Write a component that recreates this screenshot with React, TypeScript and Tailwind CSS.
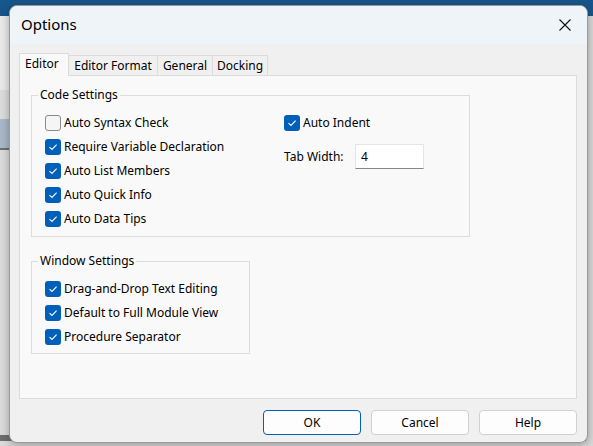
import React from "react";

const font = { fontFamily: '"Noto Sans", "Segoe UI", sans-serif' };

function Box({ checked }: { checked: boolean }) {
  if (!checked)
    return <span className="w-[16px] h-[16px] rounded-[3px] border border-[#8b8b8b] bg-[#f5f5f5] shrink-0" />;
  return (
    <span className="w-[16px] h-[16px] rounded-[3px] bg-[#005fb8] shrink-0 flex items-center justify-center">
      <svg width="10" height="10" viewBox="0 0 10 10">
        <path d="M1.5 5.2 L4 7.5 L8.6 2.6" fill="none" stroke="#fff" strokeWidth="1.1" />
      </svg>
    </span>
  );
}

function Check({ label, checked = true }: { label: string; checked?: boolean }) {
  return (
    <div className="flex items-center h-[24px] gap-[3px]">
      <Box checked={checked} />
      <span className="text-[12px] text-black leading-none whitespace-nowrap">{label}</span>
    </div>
  );
}

export default function App() {
  return (
    <div className="relative w-[593px] h-[446px] overflow-hidden bg-[#dadada]" style={font}>
      {/* desktop background */}
      <div className="absolute left-0 top-0 w-full h-[16px] bg-[#17568a]" />
      <div className="absolute left-0 top-[16px] w-[12px] h-[74px] bg-[#e9e9e9]" />
      <div className="absolute left-0 top-[90px] w-[12px] h-[29px] bg-[#dcdcdc]" />
      <div className="absolute left-0 top-[119px] w-[12px] h-[29px] bg-[#a9b8c7]" />
      <div className="absolute left-0 top-[148px] w-[12px] h-[2px] bg-[#6f6f6f]" />
      <div className="absolute left-0 top-[435px] w-full h-[6px] bg-[#6e6e6e]" />
      <div className="absolute left-[586px] top-[16px] w-[7px] h-[430px] bg-[#d8d8d8]" />

      {/* dialog */}
      <div className="absolute left-[9px] top-[5px] w-[579px] h-[438px] rounded-[8px] border border-[#9a9a9a] bg-[#f0f0f0] overflow-hidden flex flex-col shadow-[0_2px_8px_rgba(0,0,0,0.3)]">
        <div className="h-[38px] bg-[#eef4f7] flex items-center justify-between pl-[11px] pr-[16px] shrink-0">
          <span className="text-[15px] text-black leading-none -mt-[2px]">Options</span>
          <svg width="12" height="12" viewBox="0 0 12 12">
            <path d="M0.5 0.5 L11.5 11.5 M11.5 0.5 L0.5 11.5" stroke="#111" strokeWidth="1.1" />
          </svg>
        </div>

        <div className="flex-1 flex flex-col pl-[9px] pr-[10px] pt-[9px]">
          {/* tabs */}
          <div className="flex items-end h-[22px]">
            <div className="h-[23px] -mb-px relative z-10 pl-[5px] pb-[2px] border border-b-0 border-[#dcdcdc] bg-[#f9f9f9] flex items-center text-[12px] w-[50px] whitespace-nowrap">
              Editor
            </div>
            <div className="h-[20px] border border-l-0 border-b-0 border-[#dcdcdc] bg-[#f0f0f0] flex items-center text-[12px] w-[89px] justify-center whitespace-nowrap">
              Editor Format
            </div>
            <div className="h-[20px] border border-l-0 border-b-0 border-[#dcdcdc] bg-[#f0f0f0] flex items-center text-[12px] w-[55px] justify-center whitespace-nowrap">
              General
            </div>
            <div className="h-[20px] border border-l-0 border-b-0 border-[#dcdcdc] bg-[#f0f0f0] flex items-center text-[12px] w-[55px] justify-center whitespace-nowrap">
              Docking
            </div>
          </div>

          {/* panel */}
          <div className="h-[324px] border border-[#dcdcdc] bg-[#f9f9f9] pl-[11px] pt-[11px]">
            <fieldset className="w-[439px] h-[150px] border border-[#dcdcdc] pl-[13px] pt-[8px] m-0 flex">
              <legend className="-ml-[7px] px-[2px] text-[12px] leading-[16px]">Code Settings</legend>
              <div className="flex-1 flex">
                <div className="w-[239px] flex flex-col">
                  <Check label="Auto Syntax Check" checked={false} />
                  <Check label="Require Variable Declaration" />
                  <Check label="Auto List Members" />
                  <Check label="Auto Quick Info" />
                  <Check label="Auto Data Tips" />
                </div>
                <div className="flex flex-col">
                  <Check label="Auto Indent" />
                  <div className="flex items-center mt-[9px]">
                    <span className="text-[12px] w-[71px]">Tab Width:</span>
                    <div className="w-[69px] h-[25px] bg-white border border-[#e5e5e5] border-b-[#868686] flex items-center pl-[5px] text-[12px]">
                      4
                    </div>
                  </div>
                </div>
              </div>
            </fieldset>

            <fieldset className="mt-[16px] w-[219px] h-[101px] border border-[#dcdcdc] pl-[13px] pt-[8px] m-0">
              <legend className="-ml-[7px] px-[2px] text-[12px] leading-[16px]">Window Settings</legend>
              <Check label="Drag-and-Drop Text Editing" />
              <Check label="Default to Full Module View" />
              <Check label="Procedure Separator" />
            </fieldset>
          </div>

          {/* buttons */}
          <div className="flex justify-end gap-[10px] mt-[11px]">
            <button className="w-[98px] h-[25px] rounded-[4px] border border-[#005fb8] bg-[#fdfdfd] text-[12px]">OK</button>
            <button className="w-[98px] h-[25px] rounded-[4px] border border-[#d0d0d0] bg-[#fdfdfd] text-[12px]">Cancel</button>
            <button className="w-[98px] h-[25px] rounded-[4px] border border-[#d0d0d0] bg-[#fdfdfd] text-[12px]">Help</button>
          </div>
        </div>
      </div>
    </div>
  );
}
